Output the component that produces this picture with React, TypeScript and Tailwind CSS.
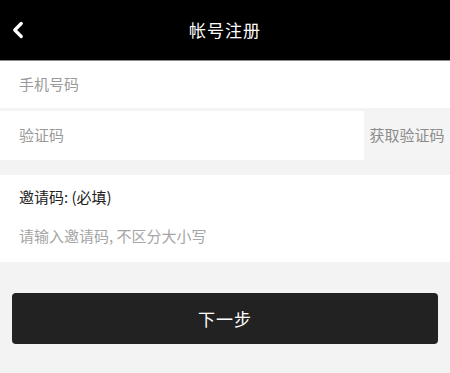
import { ChevronLeft } from "lucide-react";

export default function App() {
  return (
    <div
      className="w-[450px] h-[373px] bg-[#f3f3f3] overflow-hidden"
      style={{ fontFamily: '"Noto Sans CJK SC", "Noto Sans", sans-serif' }}
    >
      {/* Header */}
      <header className="relative h-[61px] bg-black border-b border-[#8a8a8a] flex items-center justify-center">
        <button className="absolute left-[5px] top-[17px] text-white">
          <ChevronLeft className="w-[26px] h-[26px]" strokeWidth={3} />
        </button>
        <h1 className="text-white text-[17px] tracking-[1px]">帐号注册</h1>
      </header>

      {/* Phone */}
      <div className="h-[47px] bg-white flex items-center px-[19px]">
        <span className="text-[15px] text-[#9a9a9a]">手机号码</span>
      </div>

      {/* Code */}
      <div className="mt-[3px] h-[49px] flex">
        <div className="flex-1 bg-white flex items-center px-[19px]">
          <span className="text-[15px] text-[#9a9a9a]">验证码</span>
        </div>
        <button className="w-[86px] bg-[#f4f4f4] text-[15px] text-[#8c8c8c] flex items-center justify-center">
          获取验证码
        </button>
      </div>

      {/* Invite */}
      <div className="mt-[15px] h-[87px] bg-white px-[19px] pt-[10px]">
        <p className="text-[15px] text-[#222] leading-[24px]">邀请码: (必填)</p>
        <p className="mt-[15px] text-[15px] text-[#a5a5a5] leading-[24px]">请输入邀请码, 不区分大小写</p>
      </div>

      {/* Next */}
      <div className="px-[12px] pt-[31px]">
        <button className="w-[426px] h-[51px] rounded-[4px] bg-[#222222] text-white text-[17px] tracking-[1px] flex items-center justify-center">
          下一步
        </button>
      </div>
    </div>
  );
}
